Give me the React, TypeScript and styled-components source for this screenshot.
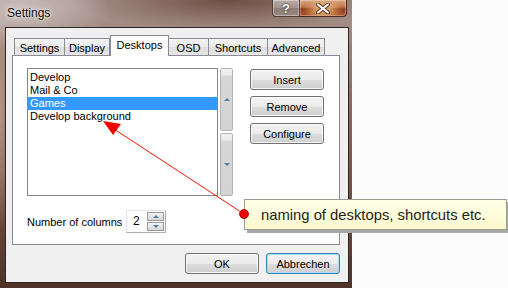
import styled, { createGlobalStyle, css } from 'styled-components';

const GlobalStyle = createGlobalStyle`
  html, body {
    margin: 0;
    padding: 0;
    background: #fcfcfc;
  }
  body {
    font-family: "Liberation Sans", Arial, sans-serif;
    font-size: 11px;
    color: #000;
  }
`;

const Page = styled.div`
  position: relative;
  width: 508px;
  height: 288px;
  overflow: hidden;
  display: flex;
`;

const Window = styled.div`
  width: 352px;
  height: 288px;
  display: flex;
  flex-direction: column;
  background:
    radial-gradient(ellipse 90px 40px at 20px 10px, #cbbfbc 0%, rgba(203, 191, 188, 0) 100%),
    radial-gradient(ellipse 160px 30px at 230px 0px, #6d4c42 0%, rgba(109, 76, 66, 0) 100%),
    radial-gradient(ellipse 12px 120px at 0px 110px, #b59889 0%, rgba(181, 152, 137, 0) 100%),
    linear-gradient(180deg, #a9958f 0%, #8b6b60 35%, #6f4e41 70%, #4f3328 100%);
`;

const TitleBar = styled.div`
  height: 27px;
  display: flex;
  justify-content: space-between;
  align-items: flex-start;
`;

const Title = styled.span`
  padding: 6px 0 0 7px;
  font-size: 12px;
  color: #111;
  text-shadow: 0 0 6px rgba(255, 255, 255, 0.8), 0 0 3px rgba(255, 255, 255, 0.8);
`;

const CaptionButtons = styled.div`
  display: flex;
  margin-right: 5px;
  height: 18px;
`;

const HelpButton = styled.div`
  width: 28px;
  height: 17px;
  box-sizing: border-box;
  border: 1px solid #4e3c36;
  border-top: none;
  border-radius: 0 0 0 4px;
  background: linear-gradient(180deg, #b9aca8 0%, #a3918c 50%, #8e7a74 51%, #9c8882 100%);
  box-shadow: inset 0 0 0 1px rgba(255, 255, 255, 0.35);
  display: flex;
  align-items: center;
  justify-content: center;
  color: #fff;
  font-weight: bold;
  font-size: 13px;
  text-shadow: 0 0 2px #333, 0 0 1px #333;
`;

const CloseButton = styled.div`
  width: 47px;
  height: 17px;
  box-sizing: border-box;
  border: 1px solid #4a2a20;
  border-left: none;
  border-top: none;
  border-radius: 0 0 4px 0;
  background:
    radial-gradient(ellipse 20px 10px at 50% 60%, #f2c77e 0%, rgba(242, 199, 126, 0) 100%),
    linear-gradient(180deg, #d9a883 0%, #c07048 45%, #8c3a1c 55%, #b3582c 100%);
  box-shadow: inset 0 0 0 1px rgba(255, 255, 255, 0.3);
  display: flex;
  align-items: center;
  justify-content: center;
`;

const Client = styled.div`
  flex: 1;
  margin: 0 3px 5px 5px;
  border: 1px solid #2e2624;
  background: #f0f0f0;
  padding: 7px 8px 0 6px;
  display: flex;
  flex-direction: column;
`;

const TabStrip = styled.div`
  display: flex;
  align-items: flex-end;
  height: 20px;
  padding-left: 2px;
`;

const Tab = styled.div<{ $w: number; $active?: boolean }>`
  width: ${(p) => p.$w}px;
  box-sizing: border-box;
  height: 17px;
  border: 1px solid #898c95;
  border-bottom: none;
  border-left-width: 0;
  background: linear-gradient(180deg, #f3f3f3 0%, #ebebeb 50%, #dedede 51%, #e6e6e6 100%);
  display: flex;
  align-items: center;
  justify-content: center;
  padding-top: 1px;
  &:first-child {
    border-left-width: 1px;
  }
  ${(p) =>
    p.$active &&
    css`
      height: 21px;
      margin-bottom: -1px;
      border-left-width: 1px;
      background: #fff;
      position: relative;
      z-index: 1;
      padding-bottom: 3px;
    `}
`;

const TabPanel = styled.div`
  width: 328px;
  height: 190px;
  box-sizing: border-box;
  border: 1px solid #898c95;
  background: #fff;
  padding: 12px 0 0 14px;
  display: flex;
  flex-direction: column;
`;

const TopRow = styled.div`
  display: flex;
  align-items: flex-start;
`;

const ListBox = styled.div`
  width: 191px;
  height: 128px;
  box-sizing: border-box;
  border: 1px solid #828790;
  padding-top: 2px;
`;

const ListItem = styled.div<{ $selected?: boolean }>`
  height: 13px;
  line-height: 13px;
  padding-left: 2px;
  background: ${(p) => (p.$selected ? '#3399ff' : 'transparent')};
  color: ${(p) => (p.$selected ? '#fff' : '#000')};
`;

const ScrollColumn = styled.div`
  margin-left: 2px;
  width: 13px;
  height: 128px;
  display: flex;
  flex-direction: column;
  gap: 2px;
`;

const ScrollHalf = styled.div`
  flex: 1;
  box-sizing: border-box;
  border: 1px solid #b3b3b3;
  border-radius: 2px;
  background: linear-gradient(180deg, #f2f2f2 0px, #ebebeb 6px, #d6d6d6 7px, #d3d3d3 100%);
  display: flex;
  align-items: center;
  justify-content: center;
`;

const Arrow = styled.span<{ $down?: boolean }>`
  width: 0;
  height: 0;
  border-left: 3px solid transparent;
  border-right: 3px solid transparent;
  ${(p) =>
    p.$down
      ? css`border-top: 3px solid #4a7eb0;`
      : css`border-bottom: 3px solid #4a7eb0;`}
`;

const ActionColumn = styled.div`
  margin: 1px 0 0 17px;
  display: flex;
  flex-direction: column;
  gap: 6px;
`;

const Button = styled.div<{ $default?: boolean }>`
  width: 74px;
  height: 21px;
  box-sizing: border-box;
  border: 1px solid ${(p) => (p.$default ? '#3c7fb1' : '#707070')};
  border-radius: 3px;
  background: linear-gradient(180deg, #f2f2f2 0%, #ebebeb 50%, #dddddd 51%, #cfcfcf 100%);
  box-shadow: inset 0 0 0 1px ${(p) => (p.$default ? '#a6e1fb' : 'rgba(255, 255, 255, 0.8)')};
  display: flex;
  align-items: center;
  justify-content: center;
  padding-top: 1px;
`;

const ColumnsRow = styled.div`
  margin-top: 14px;
  display: flex;
  align-items: center;
`;

const ColumnsLabel = styled.span`
  width: 99px;
`;

const Spin = styled.div`
  display: flex;
  height: 23px;
  box-sizing: border-box;
  border: 1px solid #abadb3;
  border-top-color: #e3e5e9;
  border-left-color: #e2e3ea;
  background: #fff;
`;

const SpinValue = styled.span`
  width: 20px;
  padding-left: 6px;
  box-sizing: border-box;
  font-size: 12px;
  line-height: 20px;
`;

const SpinButtons = styled.div`
  width: 17px;
  display: flex;
  flex-direction: column;
  gap: 1px;
  padding: 1px 1px 1px 0;
`;

const SpinButton = styled.div`
  flex: 1;
  border: 1px solid #9a9a9a;
  background: linear-gradient(180deg, #f4f4f4 0%, #e4e4e4 50%, #d8d8d8 100%);
  display: flex;
  align-items: center;
  justify-content: center;
`;

const DialogButtons = styled.div`
  margin-top: 8px;
  display: flex;
  justify-content: flex-end;
  gap: 7px;
`;

const Callout = styled.div`
  position: absolute;
  left: 244px;
  top: 199px;
  width: 263px;
  height: 31px;
  box-sizing: border-box;
  border: 1px solid #9b9b90;
  background: linear-gradient(180deg, #ffffe6 0%, #fcf9cf 100%);
  box-shadow: 3px 3px 0 #a9a9a9;
  padding-left: 16px;
  display: flex;
  align-items: center;
  font-size: 14.8px;
  color: #1e1e1e;
`;

const Overlay = styled.svg`
  position: absolute;
  left: 0;
  top: 0;
  pointer-events: none;
`;

const tabs = [
  { label: 'Settings', w: 51 },
  { label: 'Display', w: 45 },
  { label: 'Desktops', w: 59, active: true },
  { label: 'OSD', w: 40 },
  { label: 'Shortcuts', w: 59 },
  { label: 'Advanced', w: 57 },
];

const desktops = ['Develop', 'Mail & Co', 'Games', 'Develop background'];

const App = () => {
  return (
    <>
      <GlobalStyle />
      <Page>
        <Window>
          <TitleBar>
            <Title>Settings</Title>
            <CaptionButtons>
              <HelpButton>?</HelpButton>
              <CloseButton>
                <svg width="16" height="11" viewBox="0 0 16 11">
                  <path d="M3 1.5 L13 9.5 M13 1.5 L3 9.5" stroke="#5a3020" strokeWidth="4" strokeLinecap="round" />
                  <path d="M3 1.5 L13 9.5 M13 1.5 L3 9.5" stroke="#fff" strokeWidth="2.2" strokeLinecap="round" />
                </svg>
              </CloseButton>
            </CaptionButtons>
          </TitleBar>
          <Client>
            <TabStrip>
              {tabs.map((t) => (
                <Tab key={t.label} $w={t.w} $active={t.active}>
                  {t.label}
                </Tab>
              ))}
            </TabStrip>
            <TabPanel>
              <TopRow>
                <ListBox>
                  {desktops.map((d) => (
                    <ListItem key={d} $selected={d === 'Games'}>
                      {d}
                    </ListItem>
                  ))}
                </ListBox>
                <ScrollColumn>
                  <ScrollHalf>
                    <Arrow />
                  </ScrollHalf>
                  <ScrollHalf>
                    <Arrow $down />
                  </ScrollHalf>
                </ScrollColumn>
                <ActionColumn>
                  <Button>Insert</Button>
                  <Button>Remove</Button>
                  <Button>Configure</Button>
                </ActionColumn>
              </TopRow>
              <ColumnsRow>
                <ColumnsLabel>Number of columns</ColumnsLabel>
                <Spin>
                  <SpinValue>2</SpinValue>
                  <SpinButtons>
                    <SpinButton>
                      <Arrow />
                    </SpinButton>
                    <SpinButton>
                      <Arrow $down />
                    </SpinButton>
                  </SpinButtons>
                </Spin>
              </ColumnsRow>
            </TabPanel>
            <DialogButtons>
              <Button>OK</Button>
              <Button $default>Abbrechen</Button>
            </DialogButtons>
          </Client>
        </Window>
        <Overlay width="508" height="288">
          <line x1="244" y1="214" x2="114" y2="129" stroke="#f01800" strokeWidth="1" />
          <polygon points="103,121 113,135 121,124" fill="#ee0000" />
        </Overlay>
        <Callout>naming of desktops, shortcuts etc.</Callout>
        <Overlay width="508" height="288">
          <circle cx="244" cy="214" r="4.5" fill="#ee0000" stroke="#a00000" strokeWidth="0.8" />
        </Overlay>
      </Page>
    </>
  );
};

export default App;
